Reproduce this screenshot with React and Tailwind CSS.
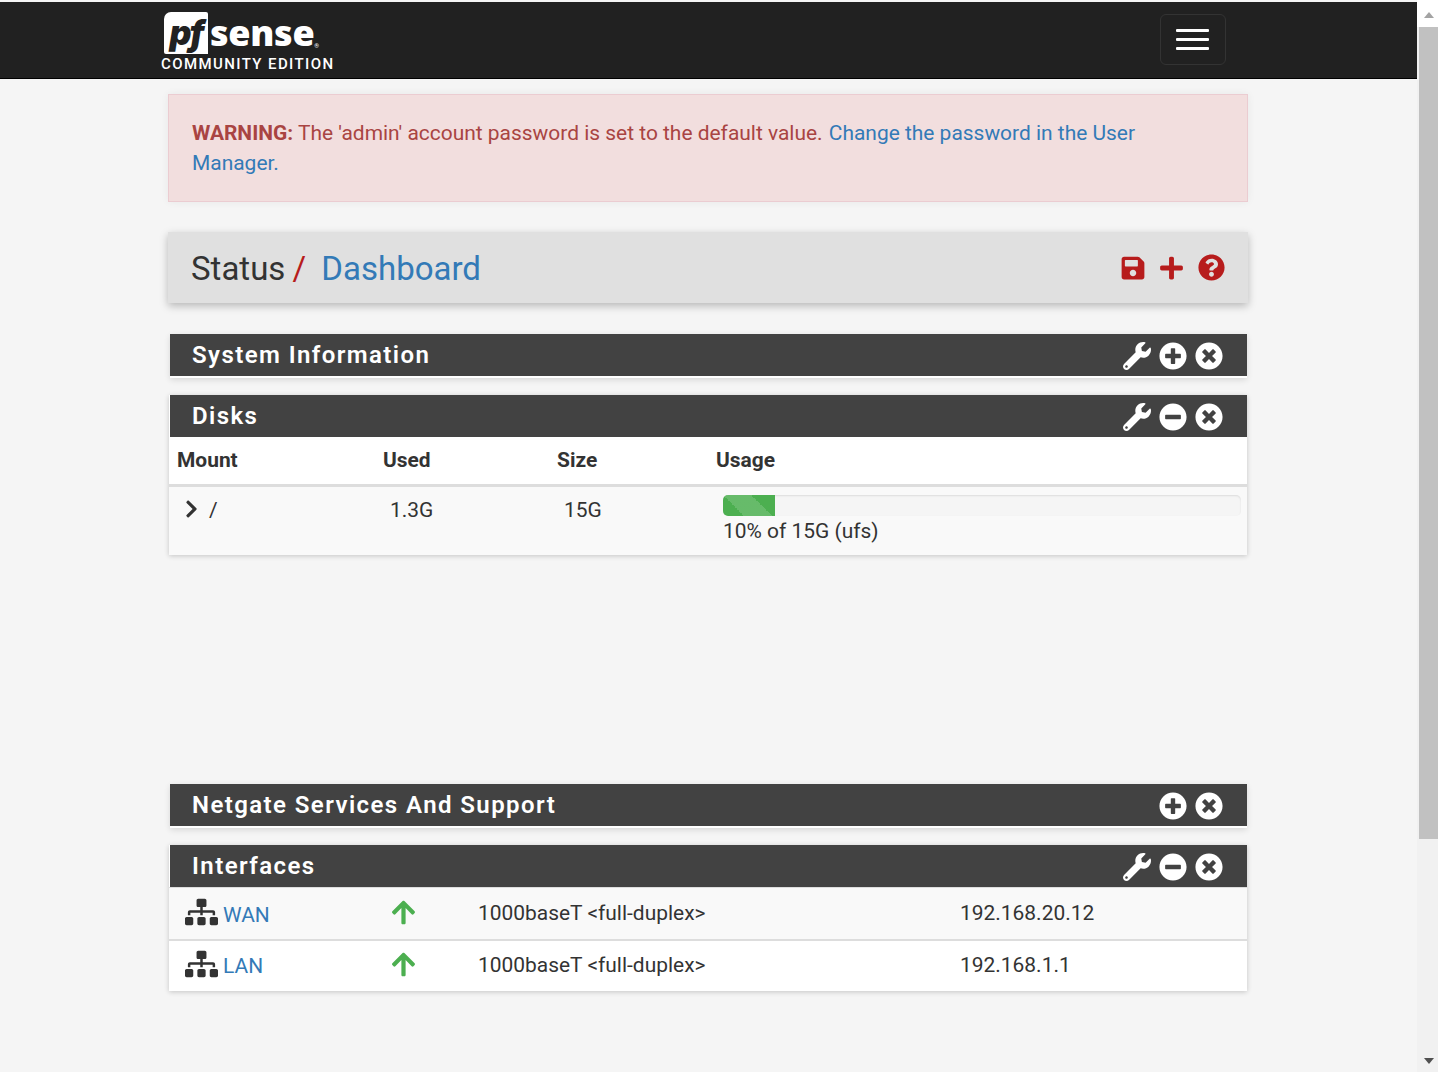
import { FaSave, FaPlus, FaQuestionCircle, FaWrench, FaPlusCircle, FaMinusCircle, FaTimesCircle, FaChevronRight, FaSitemap, FaArrowUp } from "react-icons/fa";

function PanelHeader({ title, wrench, collapse }) {
  return (
    <div className="flex h-[42px] items-center justify-between bg-[#424242] pl-[22px] pr-[24px] text-white">
      <h2 className="text-[24px] font-semibold tracking-[1.42px]">{title}</h2>
      <div className="mt-[2px] flex items-center gap-[8px]">
        {wrench && <FaWrench className="h-[28px] w-[28px]" />}
        {collapse === "plus" ? <FaPlusCircle className="h-[28px] w-[28px]" /> : <FaMinusCircle className="h-[28px] w-[28px]" />}
        <FaTimesCircle className="h-[28px] w-[28px]" />
      </div>
    </div>
  );
}

function InterfaceRow({ name, ip, striped, tall }) {
  return (
    <div className={`flex items-center text-[20.95px] ${tall ? "h-[51px] bg-[#f9f9f9]" : "h-[50px] bg-white"}`}>
      <div className="flex w-[206px] items-center pl-[15px]">
        <FaSitemap className="ml-[1px] mt-[-3px] h-[28px] w-[33px] text-[#333]" />
        <a className={`ml-[5px] text-[#337ab7] ${tall ? "mt-[4px]" : "mt-[2px]"}`}>{name}</a>
      </div>
      <div className="mt-[-3px] w-[103px] pl-[15px]"><FaArrowUp className="h-[27px] w-[27px] text-[#4caf50]" /></div>
      <div className={`w-[482px] text-[#333] ${tall ? "mt-[1px]" : "mt-[-1px]"}`}>{"1000baseT <full-duplex>"}</div>
      <div className={`text-[#333] ${tall ? "mt-[1px]" : "mt-[-1px]"}`}>{ip}</div>
    </div>
  );
}

export default function App() {
  return (
    <div className="flex h-[1072px] overflow-hidden bg-[#f5f5f5] font-['Roboto',sans-serif] text-[#333]">
      <div className="min-w-0 flex-1">
        <nav className="mt-[2px] flex h-[77px] items-start justify-between border-b border-black bg-[#212121] pl-[161px] pr-[191px]">
          <div className="flex flex-col">
            <div className="ml-[3px] mt-[10px] flex h-[42px] items-start">
              <div className="flex h-[42px] w-[44px] items-center justify-center rounded-tl-[7px] rounded-tr-[2px] rounded-bl-[2px] bg-white font-['Inter',sans-serif] text-[34px] font-black italic leading-none tracking-[-2px] text-[#212121]">pf</div>
              <span className="ml-[2px] font-['Open_Sans',sans-serif] text-[36px] font-extrabold leading-[42px] tracking-[-0.3px] text-white">sense</span>
              <span className="mt-[30px] text-[6px] leading-[8px] text-white">®</span>
            </div>
            <div className="mt-[2px] text-[15px] font-medium leading-[17px] tracking-[1.4px] text-white">COMMUNITY EDITION</div>
          </div>
          <button className="mt-[12px] flex h-[51px] w-[66px] flex-col items-start justify-center gap-[6px] rounded-[6px] border border-[#333] pl-[15px]">
            <span className="h-[3px] w-[33px] rounded-[1px] bg-white" />
            <span className="h-[3px] w-[33px] rounded-[1px] bg-white" />
            <span className="h-[3px] w-[33px] rounded-[1px] bg-white" />
          </button>
        </nav>

        <main className="ml-[168px] w-[1080px] pt-[15px]">
          <div className="h-[108px] border border-[#ebccd1] bg-[#f2dede] p-[23px] text-[20.95px] leading-[30px] text-[#a94442] shadow-[0_0_8px_rgba(0,0,0,0.06)]">
            <strong className="font-bold">WARNING:</strong> The 'admin' account password is set to the default value. <a className="ml-[1px] text-[#337ab7]">Change the password in the User Manager.</a>
          </div>

          <div className="mt-[30px] flex h-[71px] items-center justify-between bg-[#e0e0e0] px-[23px] shadow-[0_3px_8px_rgba(0,0,0,0.25)]">
            <h1 className="mt-[1px] text-[33px] leading-none">
              Status <span className="ml-[-1px] text-[#b71c1c]">/</span> <a className="ml-[7px] text-[#337ab7]">Dashboard</a>
            </h1>
            <div className="flex items-center gap-[14px] text-[#b71c1c]">
              <FaSave className="h-[26px] w-[24px]" />
              <FaPlus className="h-[26px] w-[25px]" />
              <FaQuestionCircle className="h-[27px] w-[27px]" />
            </div>
          </div>

          <section className="ml-[2px] mr-[1px] mt-[31px] h-[44px] bg-white shadow-[0_2px_6px_rgba(0,0,0,0.12)]">
            <PanelHeader title="System Information" wrench collapse="plus" />
          </section>

          <section className="mx-[1px] mt-[17px] bg-white shadow-[0_1px_5px_rgba(0,0,0,0.2)]">
            <div className="ml-[1px]"><PanelHeader title="Disks" wrench collapse="minus" /></div>
            <div className="flex h-[50px] items-start border-b-[3px] border-[#ddd] pt-[10px] text-[20.95px] font-bold leading-[26px]">
              <div className="w-[214px] pl-[8px]">Mount</div>
              <div className="w-[174px]">Used</div>
              <div className="w-[159px]">Size</div>
              <div>Usage</div>
            </div>
            <div className="flex h-[68px] bg-[#f9f9f9] text-[20.95px] leading-[26px]">
              <div className="flex w-[221px] items-start pl-[16px] pt-[10px]">
                <FaChevronRight className="mt-[2px] h-[20px] w-[13px]" />
                <span className="ml-[11px]">/</span>
              </div>
              <div className="w-[174px] pt-[10px]">1.3G</div>
              <div className="w-[159px] pt-[10px]">15G</div>
              <div className="flex-1 pr-[6px] pt-[8px]">
                <div className="h-[21px] overflow-hidden rounded-[5px] bg-[#f5f5f5] shadow-[inset_0_1px_2px_rgba(0,0,0,0.1)]">
                  <div className="h-full w-[10%] bg-[#4caf50] bg-[linear-gradient(45deg,rgba(255,255,255,0.15)_25%,transparent_25%,transparent_50%,rgba(255,255,255,0.15)_50%,rgba(255,255,255,0.15)_75%,transparent_75%,transparent)] bg-[length:56px_56px]" />
                </div>
                <div className="mt-[2px]">10% of 15G (ufs)</div>
              </div>
            </div>
          </section>

          <section className="ml-[2px] mr-[1px] mt-[229px] h-[44px] bg-white shadow-[0_2px_6px_rgba(0,0,0,0.12)]">
            <PanelHeader title="Netgate Services And Support" collapse="plus" />
          </section>

          <section className="mx-[1px] mt-[17px] bg-white shadow-[0_1px_5px_rgba(0,0,0,0.2)]">
            <div className="ml-[1px]"><PanelHeader title="Interfaces" wrench collapse="minus" /></div>
            <div className="h-[1px] bg-[#ddd]" />
            <InterfaceRow name="WAN" ip="192.168.20.12" tall />
            <div className="h-[2px] bg-[#ddd]" />
            <InterfaceRow name="LAN" ip="192.168.1.1" />
          </section>
        </main>
      </div>

      <aside className="flex w-[21px] shrink-0 flex-col bg-[#f1f1f1]">
        <div className="flex h-[27px] items-start justify-center bg-white pl-[2px] pt-[12px]">
          <div className="h-0 w-0 border-x-[5.5px] border-b-[6px] border-x-transparent border-b-[#a3a3a3]" />
        </div>
        <div className="ml-[2px] h-[812px] bg-[#c1c1c1]" />
        <div className="flex flex-1 items-end justify-center pb-[8px] pl-[2px]">
          <div className="h-0 w-0 border-x-[5.5px] border-t-[6px] border-x-transparent border-t-[#505050]" />
        </div>
      </aside>
    </div>
  );
}
